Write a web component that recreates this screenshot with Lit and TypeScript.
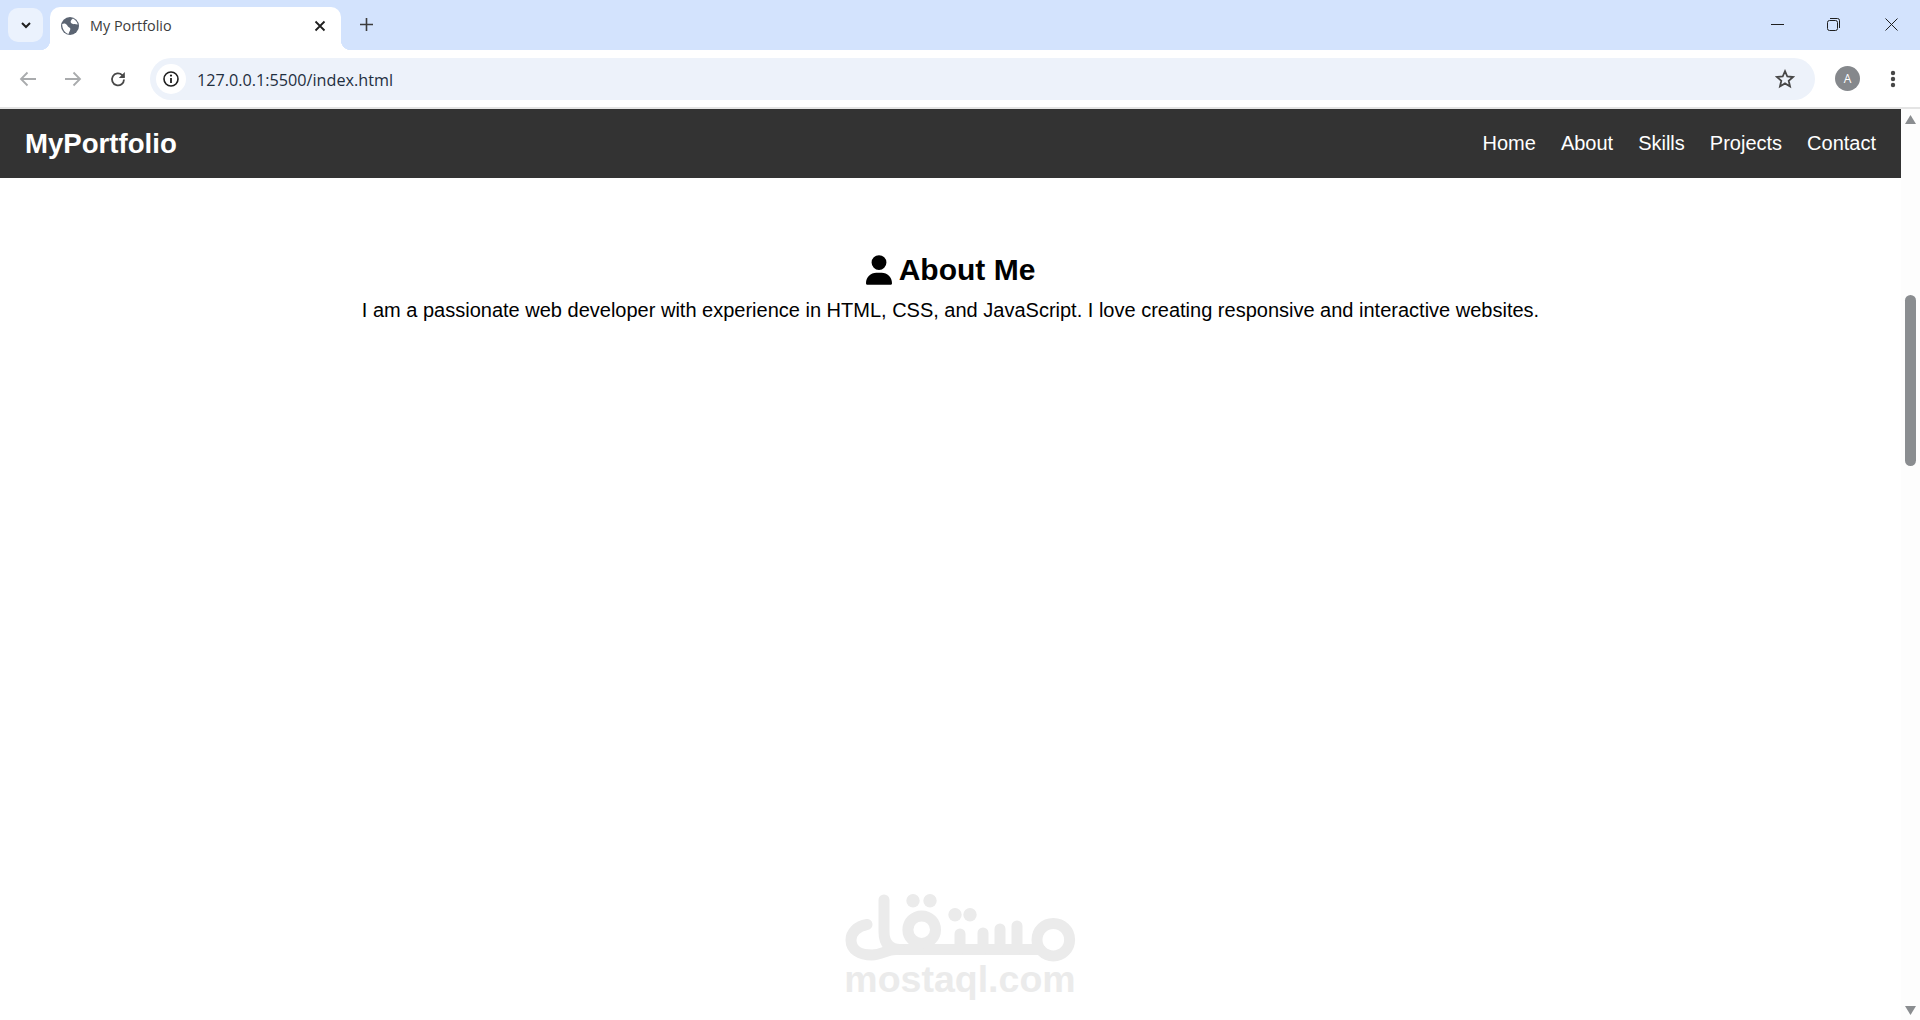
import { LitElement, html, css } from "lit";
import { customElement } from "lit/decorators.js";

const links = ["Home", "About", "Skills", "Projects", "Contact"];

@customElement("app-root")
export class AppRoot extends LitElement {
  static styles = css`
    :host { display: block; width: 1920px; height: 1020px; overflow: hidden; position: relative; background: #fff; font-family: "Liberation Sans", Arial, sans-serif; }
    * { box-sizing: border-box; }
    svg { display: block; }
    .strip { height: 50px; background: #d3e3fd; display: flex; align-items: flex-start; padding: 8px 0 0 8px; }
    .tablist { width: 35px; height: 34px; border-radius: 10px; background: #ebf2fd; display: flex; align-items: center; justify-content: center; }
    .tab { position: relative; margin: -1px 0 0 7px; width: 291px; height: 43px; background: #fff; border-radius: 10px 10px 0 0; display: flex; align-items: center; padding: 0 0 6px 11px; }
    .tab::before, .tab::after { content: ""; position: absolute; bottom: 0; width: 10px; height: 10px; }
    .tab::before { left: -10px; background: radial-gradient(circle at 0 0, transparent 10px, #fff 10.5px); }
    .tab::after { right: -10px; background: radial-gradient(circle at 100% 0, transparent 10px, #fff 10.5px); }
    .title { margin-left: 11px; font: 14.4px "Open Sans", sans-serif; color: #3c3c3c; width: 224px; }
    .newtab { margin: 10px 0 0 19px; }
    .winbtns { margin-left: auto; display: flex; align-items: center; padding: 10px 22px 0 0; }
    .min { margin-right: 43px; }
    .restore { margin-right: 45px; }
    .toolbar { height: 57px; background: #fff; border-radius: 10px 10px 0 0; display: flex; align-items: center; padding: 0 0 0 18px; }
    .nav-icons { display: flex; gap: 25px; align-items: center; width: 132px; }
    .reload { margin-left: 1px; }
    .omni { width: 1665px; height: 42px; border-radius: 21px; background: #edf2fa; display: flex; align-items: center; padding: 0 20px 0 6px; }
    .info { width: 30px; height: 30px; border-radius: 50%; background: #fff; display: flex; align-items: center; justify-content: center; }
    .url { margin: 3px 0 0 11px; font: 16.2px "Open Sans", sans-serif; color: #1f2f3f; flex: 1; }
    .avatar { margin-left: 20px; width: 25px; height: 25px; border-radius: 50%; background: #85888c; color: #fff; font: 12px "Open Sans", sans-serif; display: flex; align-items: center; justify-content: center; }
    .menu { margin-left: 30px; }
    .rule { height: 2px; background: #e4e4e4; }
    .page { display: flex; height: 911px; }
    .main { flex: 1; min-width: 0; }
    nav { height: 69px; background: #333; color: #fff; display: flex; align-items: center; justify-content: space-between; padding: 0 25px; }
    .logo { font-size: 27.6px; font-weight: 700; }
    ul { list-style: none; display: flex; gap: 25px; margin: 0; padding: 0; }
    li { font-size: 20px; }
    section { padding: 73px 20px 0; text-align: center; color: #000; }
    h2 { margin: 0; font-size: 30px; line-height: 38px; font-weight: 700; display: flex; justify-content: center; align-items: center; gap: 7px; }
    h2 svg { width: 26px; height: 30px; }
    p { margin: 9px 0 0; font-size: 20px; line-height: 24px; }
    .bar { width: 19px; background: #fdfdfd; display: flex; flex-direction: column; align-items: center; padding: 6px 0 5px; }
    .thumb { width: 11px; height: 171px; border-radius: 6px; background: #8a8d90; margin-top: 171px; }
    .down { margin-top: auto; }
    .mark { position: absolute; left: 840px; top: 888px; width: 240px; color: #ebebeb; text-align: center; pointer-events: none; }
    .mark span { display: block; margin-top: -2px; font-size: 37.5px; line-height: 36px; font-weight: 700; }
  `;

  render() {
    return html`
      <div class="strip">
        <div class="tablist">
          <svg width="14" height="14" viewBox="0 0 14 14"><path d="M3 5l4 4 4-4" fill="none" stroke="#1f1f1f" stroke-width="2"/></svg>
        </div>
        <div class="tab">
          <svg width="18" height="18" viewBox="0 0 18 18">
            <circle cx="9" cy="9" r="9" fill="#5b6472"/>
            <path d="M1.200 7C3 6 5 6.500 6 8c1 2 2 2 3 3 1 1.500-.5 3-1.500 6C4 16 1 12 1.200 7zM12 1.600C10 3 9 4.500 10 6c1.500 1.500 4 1 6.800 1.500C16 5 14.500 3 12 1.600z" fill="#fff"/>
          </svg>
          <span class="title">My Portfolio</span>
          <svg width="12" height="12" viewBox="0 0 12 12"><path d="M1.500 1.500l9 9M10.500 1.500l-9 9" stroke="#1f1f1f" stroke-width="1.800"/></svg>
        </div>
        <svg class="newtab" width="13" height="13" viewBox="0 0 13 13"><path d="M6.500 0v13M0 6.500h13" stroke="#3c3c3c" stroke-width="1.600"/></svg>
        <div class="winbtns">
          <svg class="min" width="13" height="13" viewBox="0 0 13 13"><path d="M0 6.500h13" stroke="#1f1f1f" stroke-width="1"/></svg>
          <svg class="restore" width="13" height="13" viewBox="0 0 13 13"><rect x=".5" y="2.500" width="10" height="10" rx="2" fill="none" stroke="#1f1f1f"/><path d="M3 .5h7.500a2 2 0 0 1 2 2V10" fill="none" stroke="#1f1f1f"/></svg>
          <svg width="13" height="13" viewBox="0 0 13 13"><path d="M.5.5l12 12M12.500.5l-12 12" stroke="#1f1f1f" stroke-width="1"/></svg>
        </div>
      </div>
      <div class="toolbar">
        <div class="nav-icons">
          <svg width="20" height="20" viewBox="0 0 20 20"><path d="M18 10H3M9.500 3.500L3 10l6.500 6.500" fill="none" stroke="#a9abad" stroke-width="1.800"/></svg>
          <svg width="20" height="20" viewBox="0 0 20 20"><path d="M2 10h15M10.500 3.500L17 10l-6.500 6.500" fill="none" stroke="#a9abad" stroke-width="1.800"/></svg>
          <svg class="reload" width="18" height="18" viewBox="0 0 18 18"><path d="M15 9.500a6 6 0 1 1-1.800-4.400L15 7" fill="none" stroke="#474747" stroke-width="1.800"/><path d="M15.800 2v6h-6z" fill="#474747"/></svg>
        </div>
        <div class="omni">
          <div class="info">
            <svg width="18" height="18" viewBox="0 0 18 18"><circle cx="9" cy="9" r="7" fill="none" stroke="#1f1f1f" stroke-width="1.600"/><path d="M9 8v5" stroke="#1f1f1f" stroke-width="1.800"/><circle cx="9" cy="5.600" r="1.100" fill="#1f1f1f"/></svg>
          </div>
          <span class="url">127.0.0.1:5500/index.html</span>
          <svg width="20" height="20" viewBox="0 0 20 20"><path d="M10 2.200l2.300 5.300 5.700.5-4.300 3.800 1.300 5.600-5-3-5 3 1.300-5.600L2 8l5.700-.5z" fill="none" stroke="#474747" stroke-width="1.800"/></svg>
        </div>
        <div class="avatar">A</div>
        <svg class="menu" width="6" height="18" viewBox="0 0 6 18"><circle cx="3" cy="3" r="2.200" fill="#474747"/><circle cx="3" cy="9" r="2.200" fill="#474747"/><circle cx="3" cy="15" r="2.200" fill="#474747"/></svg>
      </div>
      <div class="rule"></div>
      <div class="page">
        <div class="main">
          <nav>
            <div class="logo">MyPortfolio</div>
            <ul>${links.map((l) => html`<li>${l}</li>`)}</ul>
          </nav>
          <section>
            <h2>
              <svg viewBox="0 0 448 512"><path fill="#000" d="M224 256A128 128 0 1 0 224 0a128 128 0 1 0 0 256zm-45.700 48C79.800 304 0 383.800 0 482.300C0 498.700 13.300 512 29.700 512H418.300c16.400 0 29.700-13.300 29.700-29.700C448 383.800 368.200 304 269.700 304H178.300z"/></svg>
              About Me
            </h2>
            <p>I am a passionate web developer with experience in HTML, CSS, and JavaScript. I love creating responsive and interactive websites.</p>
          </section>
        </div>
        <div class="bar">
          <svg width="11" height="9" viewBox="0 0 11 9"><path d="M5.500 0L11 9H0z" fill="#8a8d90"/></svg>
          <div class="thumb"></div>
          <svg class="down" width="11" height="9" viewBox="0 0 11 9"><path d="M0 0h11L5.500 9z" fill="#8a8d90"/></svg>
        </div>
      </div>
      <div class="mark">
        <svg width="240" height="75" viewBox="0 0 240 75" fill="none" stroke="currentColor" stroke-width="11" stroke-linecap="round">
          <path d="M27 36.500C17 38 11 45 11 52c0 10 9 15 21 15 10 0 14-5.500 24-5.500H200"/>
          <path d="M44 12V44c0 12 6 17.500 16 17.500"/>
          <circle cx="81.700" cy="41.700" r="13.800"/>
          <path d="M120 46V61M143 45V61M160 41V61M177 38V61"/>
          <circle cx="213.300" cy="51.700" r="16.300"/>
          <g fill="currentColor" stroke="none">
            <circle cx="73" cy="12.700" r="6.700"/><circle cx="90" cy="12.700" r="6.700"/>
            <circle cx="115" cy="26.700" r="6.700"/><circle cx="130" cy="26.700" r="6.700"/>
          </g>
        </svg>
        <span>mostaql.com</span>
      </div>
    `;
  }
}
